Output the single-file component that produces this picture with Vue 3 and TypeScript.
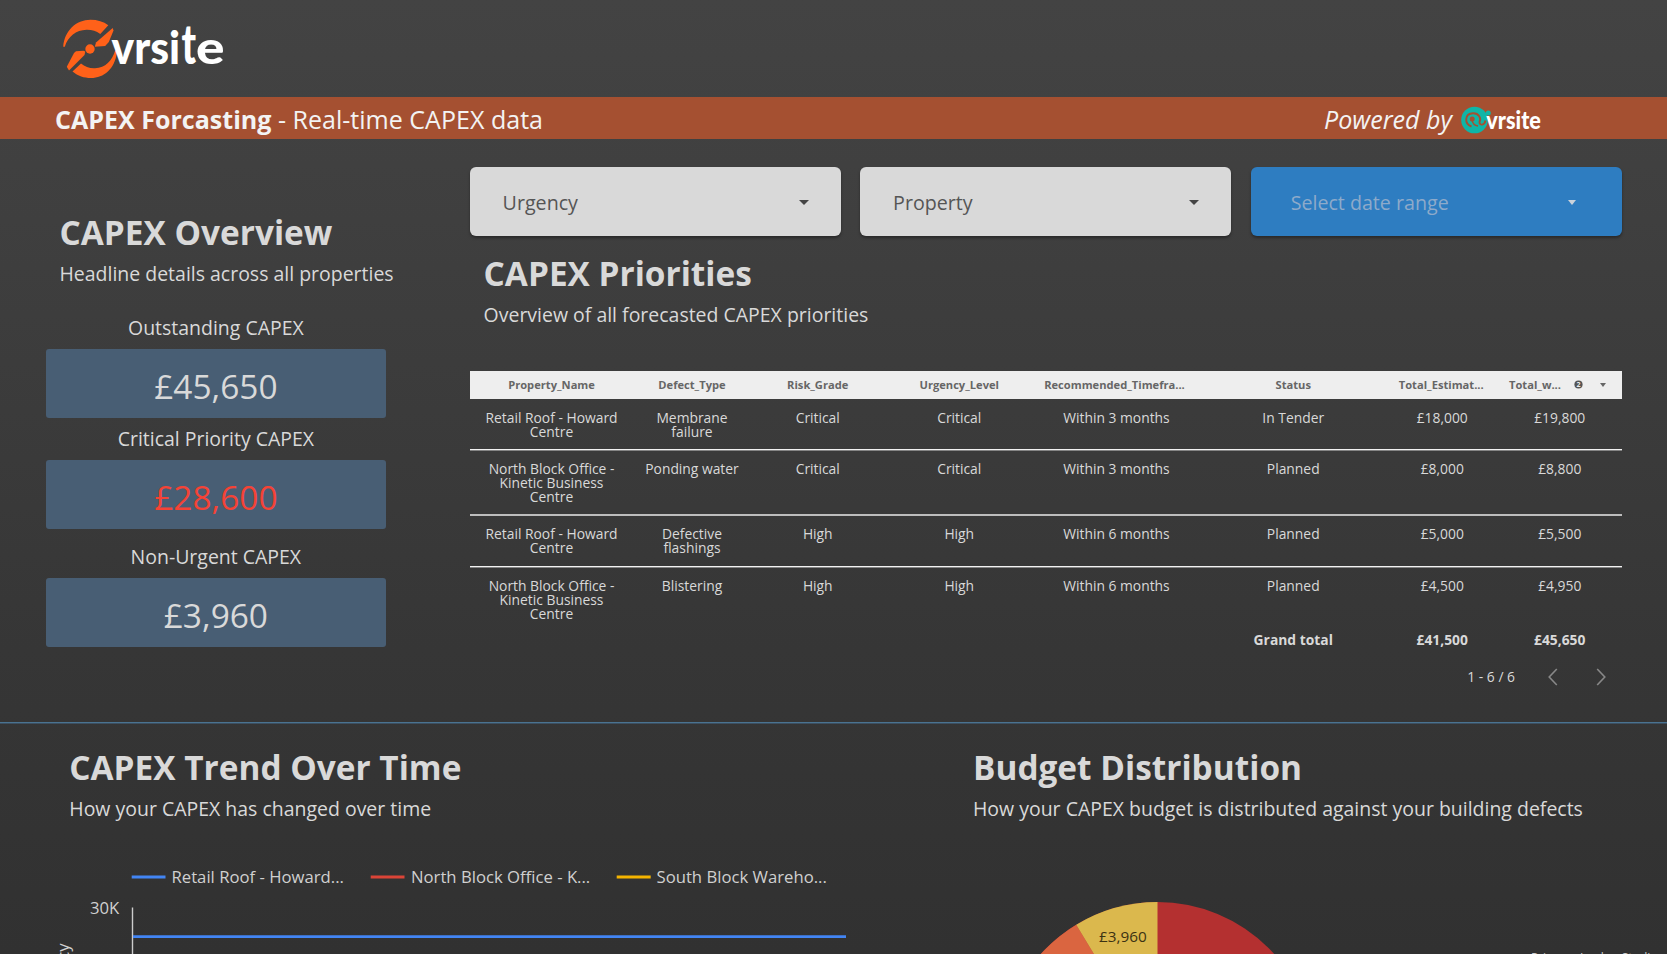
<script setup lang="ts">
interface Kpi { label: string; value: string; critical?: boolean }
interface Row { cells: string[]; tall: boolean }

const kpis: Kpi[] = [
  { label: 'Outstanding CAPEX', value: '£45,650' },
  { label: 'Critical Priority CAPEX', value: '£28,600', critical: true },
  { label: 'Non-Urgent CAPEX', value: '£3,960' },
]

const columns: string[] = [
  'Property_Name', 'Defect_Type', 'Risk_Grade', 'Urgency_Level',
  'Recommended_Timefra...', 'Status', 'Total_Estimat...',
]

const rows: Row[] = [
  { cells: ['Retail Roof - Howard\nCentre', 'Membrane\nfailure', 'Critical', 'Critical', 'Within 3 months', 'In Tender', '£18,000', '£19,800'], tall: false },
  { cells: ['North Block Office -\nKinetic Business\nCentre', 'Ponding water', 'Critical', 'Critical', 'Within 3 months', 'Planned', '£8,000', '£8,800'], tall: true },
  { cells: ['Retail Roof - Howard\nCentre', 'Defective\nflashings', 'High', 'High', 'Within 6 months', 'Planned', '£5,000', '£5,500'], tall: false },
  { cells: ['North Block Office -\nKinetic Business\nCentre', 'Blistering', 'High', 'High', 'Within 6 months', 'Planned', '£4,500', '£4,950'], tall: true },
]
</script>

<template>
  <main class="page">
    <header class="top">
      <svg class="brand" width="180" height="70" viewBox="55 12 180 70">
        <g fill="#ff6119">
          <path d="M63.2 46.7C64.5 31 76 19.8 90.500 19.800C97.500 19.800 103.500 21.700 108.300 25.300L100.300 34C96 30.800 92 29.600 86.500 29.700C76 30 68 36.500 64.800 46.700Z" />
          <path d="M112.700 28L113.500 30.500L108.800 42L105.200 46L94.800 46.800L96 42.500Z" />
          <path d="M66.800 66.800L69 70.500L84.500 55L85.300 51.500L83.500 50.800L76 51.200L74 53Z" />
          <path d="M72.500 71.500C78 76 84 78 91 78C104 78 114.500 69 116.800 53L115.300 50C112 61 105.500 67.800 95 68.200C89.500 68.400 85 67 81 63.500Z" />
          <circle cx="90" cy="49" r="4.700" />
        </g>
        <g class="logo-text">
          <text x="111.600" y="64" textLength="68.500" lengthAdjust="spacingAndGlyphs">vrsi</text>
          <text transform="translate(181.500 64) scale(.84 1.180)">t</text>
          <text x="196" y="64" textLength="28.500" lengthAdjust="spacingAndGlyphs">e</text>
        </g>
      </svg>
    </header>

    <div class="banner">
      <p class="banner-title"><b>CAPEX Forcasting</b> - Real-time CAPEX data</p>
      <div class="powered">
        <i>Powered by</i>
        <svg width="82" height="30" viewBox="0 0 82 30">
          <circle cx="13.500" cy="15" r="13.300" fill="#0fb5a7" />
          <circle cx="27.300" cy="8" r="2.500" fill="#0fb5a7" />
          <path d="M10.500 21.500C3 19 3.500 8.500 12 8.200C18 8 20.500 13.500 18.500 17C18.500 21 23.500 20.500 24.500 15.500" fill="none" stroke="#a55031" stroke-width="1.900" />
          <path d="M10.800 14.300C11.500 18.500 14 20.500 17 21" fill="none" stroke="#a55031" stroke-width="1.500" />
          <circle cx="11.200" cy="14" r="2.500" fill="#a55031" />
          <text class="mini" x="25.300" y="23.500" textLength="54.500" lengthAdjust="spacingAndGlyphs">vrsite</text>
        </svg>
      </div>
    </div>

    <section class="summary">
      <div class="overview">
        <h1>CAPEX Overview</h1>
        <p class="sub">Headline details across all properties</p>
        <div class="kpis">
          <div v-for="k in kpis" :key="k.label" class="kpi">
            <span class="kpi-label">{{ k.label }}</span>
            <div class="kpi-card" :class="{ critical: k.critical }">{{ k.value }}</div>
          </div>
        </div>
      </div>

      <div class="priorities">
        <div class="filters">
          <button class="filter">Urgency<i class="caret"></i></button>
          <button class="filter">Property<i class="caret"></i></button>
          <button class="filter date">Select date range<i class="caret"></i></button>
        </div>
        <div class="titles">
          <h1>CAPEX Priorities</h1>
          <p class="sub">Overview of all forecasted CAPEX priorities</p>
        </div>
        <div class="table">
          <div class="tr head">
            <span v-for="c in columns" :key="c">{{ c }}</span>
            <span class="sorted">Total_w...
              <svg class="rank" width="9" height="9" viewBox="0 0 9 9"><circle cx="4.500" cy="4.500" r="4.100" fill="#555" /><text x="4.500" y="7" text-anchor="middle">2</text></svg>
              <i class="sort"></i>
            </span>
          </div>
          <div v-for="(r, i) in rows" :key="i" class="tr body" :class="{ tall: r.tall }">
            <span v-for="(c, j) in r.cells" :key="j">{{ c }}</span>
          </div>
          <div class="tr total">
            <span></span><span></span><span></span><span></span><span></span>
            <span>Grand total</span><span>£41,500</span><span>£45,650</span>
          </div>
        </div>
        <div class="pager">
          <span>1 - 6 / 6</span>
          <svg width="10" height="18" viewBox="0 0 10 18"><path d="M8.800 1L1.200 9L8.800 17" /></svg>
          <svg width="10" height="18" viewBox="0 0 10 18"><path d="M1.200 1L8.800 9L1.200 17" /></svg>
        </div>
      </div>
    </section>

    <section class="charts">
      <div class="trend">
        <h1>CAPEX Trend Over Time</h1>
        <p class="sub">How your CAPEX has changed over time</p>
        <svg class="plot" width="860" height="99" viewBox="0 855 860 99">
          <g stroke-width="2.800">
            <path d="M131.700 877H165.500" stroke="#4285f4" />
            <path d="M370.700 877H404.500" stroke="#db4437" />
            <path d="M616.700 877H650.700" stroke="#f4b400" />
          </g>
          <text x="171.500" y="883">Retail Roof - Howard...</text>
          <text x="411" y="883">North Block Office - K...</text>
          <text x="656.500" y="883">South Block Wareho...</text>
          <text x="119.300" y="914" text-anchor="end">30K</text>
          <path d="M132.500 907.500V954" stroke="#ccc" stroke-width="1.400" />
          <path d="M133 936.700H846" stroke="#4285f4" stroke-width="2.800" />
          <text transform="translate(68.500 943.500) rotate(-90)" text-anchor="end">cy</text>
        </svg>
      </div>
      <div class="budget">
        <h1>Budget Distribution</h1>
        <p class="sub">How your CAPEX budget is distributed against your building defects</p>
        <svg class="plot" width="694" height="99" viewBox="973 855 694 99">
          <circle cx="1157.500" cy="1059" r="157" fill="#b43030" />
          <path d="M1157.500 1059L1000.500 1059A157 157 0 0 1 1076.200 924.700Z" fill="#da6540" />
          <path d="M1157.500 1059L1076.200 924.700A157 157 0 0 1 1157.500 902Z" fill="#dbb84d" />
          <text class="slice" x="1099" y="942">£3,960</text>
          <text class="legal" x="1531" y="962">Privacy</text>
          <text class="legal" x="1580" y="962">Looker Studio</text>
        </svg>
      </div>
    </section>
  </main>
</template>

<style>
body { margin: 0; background: #323232; }
</style>

<style scoped>
.page {
  width: 1667px; height: 954px; overflow: hidden; box-sizing: border-box;
  display: flex; flex-direction: column;
  background: linear-gradient(#434343 0, #3f3f3f 220px, #363636 650px, #313131 954px);
  font-family: "Open Sans", "Noto Sans", sans-serif; color: #d9d9d9;
}
h1, p { margin: 0; white-space: nowrap; }
h1 { font-size: 33.400px; line-height: 46px; font-weight: 700; }
.sub { font-size: 19.480px; line-height: 26px; margin-top: 6px; }
.top { height: 97.300px; flex: none; box-sizing: border-box; padding: 12px 0 0 55px; }
.brand { display: block; }
.logo-text { fill: #fff; font: 900 46px Lato, sans-serif; }
.banner {
  height: 41.700px; flex: none; background: #a55031; color: #f3f3f3; font-size: 25.050px;
  display: flex; align-items: center; justify-content: space-between; padding: 0 124px 0 55px; box-sizing: border-box;
}
.banner-title { line-height: 40px; padding-top: 1px; }
.powered { display: flex; align-items: center; gap: 9px; line-height: 40px; padding-top: 1px; }
.powered svg { margin-top: 2px; }
.mini { fill: #fff; font: 900 25px Lato, sans-serif; }
.summary {
  height: 584.300px; flex: none; box-sizing: border-box; display: flex;
  border-bottom: 1px solid #4a7391; box-shadow: 0 1px 0 #3c4f60;
}
.overview { width: 469.600px; flex: none; box-sizing: border-box; padding: 70.300px 0 0 59.500px; }
.kpis { width: 340.500px; margin: 27.400px 0 0 -13.900px; }
.kpi { display: flex; flex-direction: column; align-items: center; gap: 8.500px; margin-bottom: 7.200px; }
.kpi:nth-child(2) { margin-bottom: 14.200px; }
.kpi-label { font-size: 19.480px; line-height: 26px; }
.kpi-card {
  width: 100%; height: 69.300px; line-height: 75.500px; box-sizing: border-box; text-align: center;
  font-size: 33.450px; background: #485e74; border-radius: 3px;
}
.critical { color: #f44336; }
.priorities { width: 1152.400px; }
.filters { display: grid; grid-template-columns: repeat(3, 1fr); gap: 19.200px; padding-top: 28px; }
.filter {
  height: 69.500px; border: 0; border-radius: 6px; background: #d9d9d9; color: #555;
  font: 19.650px "Open Sans", sans-serif; display: flex; align-items: center; justify-content: space-between;
  padding: 2px 32px 0 33px; box-shadow: 0 2px 3px rgba(0,0,0,.35);
}
.filter.date { background: #2e7dc1; color: #8daaca; padding: 2px 46px 0 40px; }
.caret { border: 5px solid transparent; border-top: 5px solid #444; border-bottom: 0; }
.date .caret { border-top-color: #cbd3db; border-width: 5px 4.500px 0; }
.titles { padding: 13.600px 0 0 14px; }
.table { margin-top: 43.080px; font-size: 13.850px; line-height: 13.850px; text-align: center; }
.tr { display: grid; grid-template-columns: 163.900px 117px 134.500px 148.500px 166px 187.500px 110.500px 124.500px; }
.head { height: 27.500px; align-items: center; background: #eee; color: #666; font-size: 11.150px; font-weight: 700; }
.head span:nth-child(5) { margin-left: -4px; }
.head span:nth-child(7) { margin-left: -2px; }
.sorted { display: flex; align-items: center; padding-left: 11.500px; white-space: nowrap; }
.rank { margin-left: 13.500px; }
.rank text { font-size: 7px; fill: #eee; }
.sort { border: 3px solid transparent; border-top: 4px solid #666; border-bottom: 0; margin-left: 17px; }
.body {
  height: 51.500px; box-sizing: border-box; padding-top: 12px; white-space: pre-line;
  border-bottom: 1px solid #f2f2f2; box-shadow: 0 1px 0 #858585;
}
.body.tall { height: 65.300px; border-color: #bdbdbd; box-shadow: 0 1px 0 #bdbdbd; }
.body:nth-child(5) { border-bottom: 0; box-shadow: none; height: 64px; }
.total { font-weight: 700; padding-top: 2.500px; }
.pager { display: flex; justify-content: flex-end; align-items: center; gap: 38px; font-size: 13.850px; line-height: 20px; padding: 20px 16px 0 0; }
.pager span { margin-right: -5px; }
.pager path { fill: none; stroke: #888; stroke-width: 1.600; }
.charts { display: flex; flex: 1; }
.trend { width: 973px; }
.trend h1, .trend .sub { padding-left: 69.300px; }
.trend h1, .budget h1 { padding-top: 21px; }
.plot { display: block; margin-top: 32.700px; fill: #d0d0d0; font-size: 16.700px; }
.trend .plot, .budget .plot { overflow: hidden; }
.slice { fill: #3b3213; font-size: 15.300px; }
.legal { fill: #ccc; font-size: 12px; }
</style>
